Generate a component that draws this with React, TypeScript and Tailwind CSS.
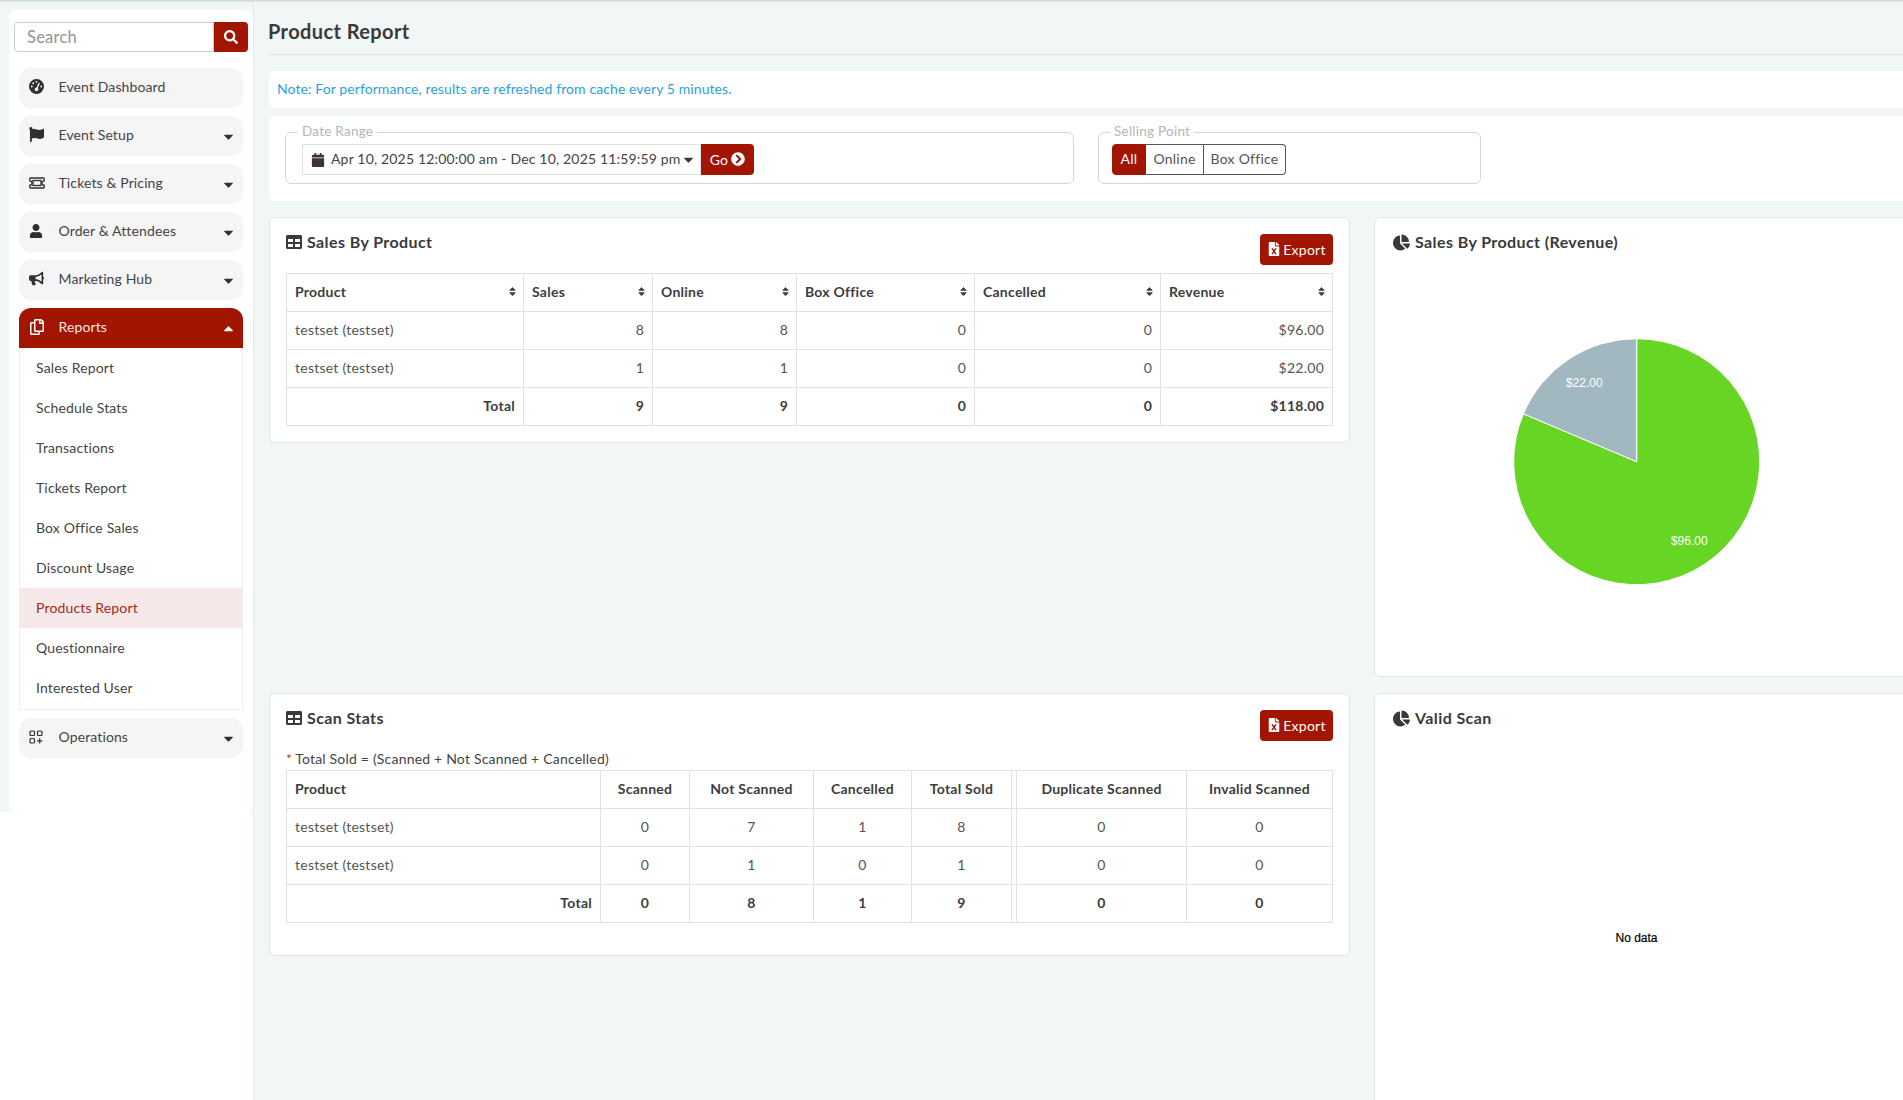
import React from "react";
import { FaSearch, FaFlag, FaUser, FaBullhorn, FaRegCopy, FaCaretDown, FaCaretUp, FaCalendar, FaChevronCircleRight, FaFileExcel, FaTable, FaChartPie, FaSort } from "react-icons/fa";
import { FaGaugeHigh } from "react-icons/fa6";

const TicketIcon = () => (
  <svg width="16" height="12" viewBox="0 0 16 12" fill="none" stroke="currentColor" strokeWidth="1.3">
    <path d="M1.5 1h13a.7.7 0 0 1 .7.7v2.1a2.2 2.2 0 0 0 0 4.4v2.1a.7.7 0 0 1-.7.7h-13a.7.7 0 0 1-.7-.7V8.200a2.200 2.200 0 0 0 0-4.400V1.700A.7.7 0 0 1 1.500 1z" />
    <rect x="4" y="3.500" width="8" height="5" />
  </svg>
);

const OpsIcon = () => (
  <svg width="14" height="14" viewBox="0 0 14 14" fill="none" stroke="currentColor" strokeWidth="1.2">
    <rect x="1" y="1" width="4.500" height="4.500" rx="1" />
    <rect x="8.500" y="1" width="4.500" height="4.500" rx="1" />
    <rect x="1" y="8.500" width="4.500" height="4.500" rx="1" />
    <path d="M10.700 8.200v5.300M8 10.800h5.300" />
  </svg>
);

const navTop = [
  { label: "Event Dashboard", icon: <FaGaugeHigh size={15} />, caret: false },
  { label: "Event Setup", icon: <FaFlag size={15} />, caret: true },
  { label: "Tickets & Pricing", icon: <TicketIcon />, caret: true },
  { label: "Order & Attendees", icon: <FaUser size={14} />, caret: true },
  { label: "Marketing Hub", icon: <FaBullhorn size={15} />, caret: true },
];

const subItems = ["Sales Report", "Schedule Stats", "Transactions", "Tickets Report", "Box Office Sales", "Discount Usage", "Products Report", "Questionnaire", "Interested User"];

function NavItem({ label, icon, caret }: { label: string; icon: React.ReactNode; caret: boolean }) {
  return (
    <div className="flex h-10 items-center rounded-xl bg-[#f5f5f6] pl-[10px] pr-[7px] text-[14px] tracking-[0.12px] text-[#444]">
      <span className="flex w-[29.5px] shrink-0 items-center pb-[3px] text-[#342f2f]">{icon}</span>
      <span className="flex-1 pb-[3px]">{label}</span>
      {caret && <FaCaretDown size={15} className="text-[#342f2f]" />}
    </div>
  );
}

function Sidebar() {
  return (
    <aside className="flex w-[254px] shrink-0 flex-col border-r border-[#e4e9ea] bg-white">
      <div className="bg-[#f1f6f6] pl-[9px] pt-[7px]">
        <div className="h-[802px] rounded-t-lg rounded-b-md bg-white px-[5px] pt-[12px]">
          <div className="flex h-[30px]">
            <div className="flex h-[30px] w-[200px] items-center rounded-l border border-[#ccc] bg-white pl-[12px] text-[16.5px] text-[#8f9499]">Search</div>
            <div className="flex h-[30px] w-[34px] items-center justify-center rounded-r bg-[#a31503] pb-px pr-px text-white"><FaSearch size={14} /></div>
          </div>
          <nav className="mx-[5px] mt-[16px] flex flex-col gap-2">
            {navTop.map((n) => <NavItem key={n.label} {...n} />)}
            <div>
              <div className="flex h-10 items-center rounded-t-xl bg-[#a31503] pl-[10px] pr-[7px] text-[14px] tracking-[0.12px] text-[#f7e7e5]">
                <span className="flex w-[29.5px] shrink-0 items-center pb-[3px] text-white"><FaRegCopy size={16} /></span>
                <span className="flex-1 pb-[3px]">Reports</span>
                <FaCaretUp size={15} className="text-white" />
              </div>
              <div className="border border-t-0 border-[#eeeeee] bg-white pb-px">
                {subItems.map((s) => (
                  <div key={s} className={`flex h-10 items-center pb-[2px] pl-[16px] text-[14px] tracking-[0.15px] ${s === "Products Report" ? "bg-[#f6e7e8] text-[#a52a20]" : "text-[#444]"}`}>{s}</div>
                ))}
              </div>
            </div>
            <NavItem label="Operations" icon={<OpsIcon />} caret />
          </nav>
        </div>
      </div>
      <div className="flex-1 bg-white" />
    </aside>
  );
}

function Th({ children, sort, cls = "" }: { children?: React.ReactNode; sort?: boolean; cls?: string }) {
  return (
    <th className={`h-[38px] border border-[#e0e2e4] pb-[2px] pl-2 text-[14px] font-bold text-[#3d3d3d] ${sort ? "pr-[5px]" : "pr-2"} ${cls}`}>
      {sort ? (
        <span className="flex items-center justify-between">{children}<FaSort size={11} className="text-[#3d3d3d]" /></span>
      ) : children}
    </th>
  );
}

function Td({ children, cls = "" }: { children?: React.ReactNode; cls?: string }) {
  return <td className={`h-[38px] border border-[#e0e2e4] px-2 pb-[2px] text-[14px] ${cls}`}>{children}</td>;
}

function ExportBtn() {
  return (
    <button className="flex h-[31px] w-[73px] items-center justify-center gap-[2px] rounded bg-[#a31503] pb-px text-[14px] text-white">
      <FaFileExcel size={14} />Export
    </button>
  );
}

function SalesTable() {
  const rows = [
    ["testset (testset)", "8", "8", "0", "0", "$96.00"],
    ["testset (testset)", "1", "1", "0", "0", "$22.00"],
  ];
  return (
    <table className="w-[1046px] table-fixed border-collapse text-[#555]">
      <colgroup>
        <col className="w-[237px]" /><col className="w-[129px]" /><col className="w-[144px]" /><col className="w-[178px]" /><col className="w-[186px]" /><col className="w-[172px]" />
      </colgroup>
      <thead>
        <tr>{["Product", "Sales", "Online", "Box Office", "Cancelled", "Revenue"].map((h) => <Th key={h} sort cls="text-left">{h}</Th>)}</tr>
      </thead>
      <tbody>
        {rows.map((r, i) => (
          <tr key={i}>{r.map((c, j) => <Td key={j} cls={j === 0 ? "text-left" : "text-right"}>{c}</Td>)}</tr>
        ))}
        <tr className="font-bold text-[#3d3d3d]">{["Total", "9", "9", "0", "0", "$118.00"].map((c, j) => <Td key={j} cls="text-right">{c}</Td>)}</tr>
      </tbody>
    </table>
  );
}

function ScanTable() {
  const rows = [
    ["0", "7", "1", "8", "", "0", "0"],
    ["0", "1", "0", "1", "", "0", "0"],
  ];
  return (
    <table className="w-[1046px] table-fixed border-collapse text-[#555]">
      <colgroup>
        <col className="w-[314px]" /><col className="w-[89px]" /><col className="w-[124px]" /><col className="w-[98px]" /><col className="w-[100px]" /><col className="w-[5px]" /><col className="w-[170px]" /><col className="w-[146px]" />
      </colgroup>
      <thead>
        <tr>
          <Th cls="text-left">Product</Th>
          {["Scanned", "Not Scanned", "Cancelled", "Total Sold"].map((h) => <Th key={h} cls="text-center">{h}</Th>)}
          <th className="border border-[#e0e2e4]" />
          {["Duplicate Scanned", "Invalid Scanned"].map((h) => <Th key={h} cls="text-center">{h}</Th>)}
        </tr>
      </thead>
      <tbody>
        {rows.map((r, i) => (
          <tr key={i}>
            <Td cls="text-left">testset (testset)</Td>
            {r.map((c, j) => j === 4 ? <td key={j} className="border border-[#e0e2e4]" /> : <Td key={j} cls="text-center">{c}</Td>)}
          </tr>
        ))}
        <tr className="font-bold text-[#3d3d3d]">
          <Td cls="text-right">Total</Td>
          {["0", "8", "1", "9", "", "0", "0"].map((c, j) => j === 4 ? <td key={j} className="border border-[#e0e2e4]" /> : <Td key={j} cls="text-center">{c}</Td>)}
        </tr>
      </tbody>
    </table>
  );
}

function CardTitle({ icon, children }: { icon: React.ReactNode; children: React.ReactNode }) {
  return (
    <h3 className="flex h-4 items-center gap-[5px] text-[16px] font-bold leading-4 tracking-[0.4px] text-[#3a3a3a]">
      {icon}{children}
    </h3>
  );
}

function Pie() {
  const cx = 245.7, cy = 200.7, r = 123;
  const lx = cx - 113.3, ly = cy - 47.9;
  return (
    <svg width="491" height="398" viewBox="0 0 491 398" className="-ml-[2px] mt-[11px] block">
      <path d={`M${cx} ${cy}L${cx} ${cy - r}A${r} ${r} 0 1 1 ${lx} ${ly}Z`} fill="#66d523" stroke="#fff" strokeWidth="1" />
      <path d={`M${cx} ${cy}L${lx} ${ly}A${r} ${r} 0 0 1 ${cx} ${cy - r}Z`} fill="#a1b8c1" stroke="#fff" strokeWidth="1" />
      <text x="193.300" y="125.500" textAnchor="middle" fontSize="12" letterSpacing="0" fill="#fff" fontFamily="'Liberation Sans', Arial, sans-serif">$22.00</text>
      <text x="298.300" y="283.500" textAnchor="middle" fontSize="12" letterSpacing="0" fill="#fff" fontFamily="'Liberation Sans', Arial, sans-serif">$96.00</text>
    </svg>
  );
}

const card = "rounded-md border border-[#e3e6e8] bg-white";

export default function App() {
  return (
    <div className="flex h-[1100px] w-[1903px] flex-col overflow-hidden bg-[#f1f6f6] font-['Lato',sans-serif] tracking-[0.25px] text-[#444]">
      <div className="h-[3px] shrink-0 bg-[linear-gradient(#cfd3d6,#f1f6f6)]" />
      <div className="flex min-h-0 flex-1">
        <Sidebar />
        <main className="min-w-0 flex-1 pl-[15px]">
          <div className="-ml-px flex h-[52px] items-center border-b border-[#dde2e4] pt-[4px]">
            <h1 className="text-[20px] font-bold tracking-[0.4px] text-[#3a3a3a]">Product Report</h1>
          </div>
          <div className="mt-[16px] flex h-[37px] items-center rounded-l-md bg-white pb-[2px] pl-[8px] text-[14px] tracking-[0.09px] text-[#2f9fdc]">
            Note: For performance, results are refreshed from cache every 5 minutes.
          </div>
          <div className="mt-[8px] flex h-[85px] gap-[24px] rounded-l-md bg-white pl-[16px] pt-[7px]">
            <fieldset className="h-[61px] w-[789px] rounded-md border border-[#d3d6d9] px-[16px]">
              <legend className="ml-[-4px] -translate-y-[1.5px] px-[4px] text-[13.5px] leading-[18px] text-[#b5b5b5]">Date Range</legend>
              <div className="mt-[3px] flex h-[31px]">
                <div className="flex w-[399px] items-center border border-[#dee2e6] pl-[8px] text-[14px] tracking-[0.17px] text-[#444]">
                  <FaCalendar size={14} className="mr-[6px] shrink-0 text-[#3f3232]" />
                  <span className="whitespace-nowrap pb-[2px]">Apr 10, 2025 12:00:00 am - Dec 10, 2025 11:59:59 pm</span>
                  <FaCaretDown size={15} className="shrink-0 text-[#3f3232]" />
                </div>
                <button className="flex w-[53px] items-center justify-center gap-[3px] rounded-r bg-[#a31503] pb-px text-[14px] text-white">
                  Go<FaChevronCircleRight size={14} />
                </button>
              </div>
            </fieldset>
            <fieldset className="h-[61px] w-[383px] rounded-md border border-[#d3d6d9] px-[13px]">
              <legend className="ml-[-2px] -translate-y-[1.5px] px-[4px] text-[13.5px] leading-[18px] text-[#b5b5b5]">Selling Point</legend>
              <div className="mt-[3px] flex h-[31px] w-[174px] text-[14px]">
                <div className="flex w-[34px] items-center justify-center rounded-l border border-[#a31503] bg-[#a31503] pb-[2px] text-white">All</div>
                <div className="flex w-[58px] items-center justify-center border border-l-0 border-[#555] pb-[2px] text-[#555]">Online</div>
                <div className="flex w-[82px] items-center justify-center rounded-r border border-l-0 border-[#555] pb-[2px] text-[#555]">Box Office</div>
              </div>
            </fieldset>
          </div>
          <div className="mt-[16px] grid grid-cols-[1081px_530px] grid-rows-[460px_auto] gap-x-[24px] gap-y-[16px]">
            <section className={`${card} self-start px-[16px] pb-[16px] pt-[16px]`}>
              <div className="flex h-[31px] items-start justify-between">
                <CardTitle icon={<FaTable size={16} />}>Sales By Product</CardTitle>
                <ExportBtn />
              </div>
              <div className="mt-[8px]"><SalesTable /></div>
            </section>
            <section className={`${card} rounded-r-none pl-[18px] pt-[16px]`}>
              <CardTitle icon={<FaChartPie size={17} />}>Sales By Product (Revenue)</CardTitle>
              <Pie />
            </section>
            <section className={`${card} self-start px-[16px] pb-[32px] pt-[16px]`}>
              <div className="flex h-[31px] items-start justify-between">
                <CardTitle icon={<FaTable size={16} />}>Scan Stats</CardTitle>
                <ExportBtn />
              </div>
              <div className="flex h-[29px] items-end pb-px text-[14px] leading-[20px] tracking-[0.2px] text-[#444]">
                <span className="mr-[3px] text-[#c0392b]">*</span>Total Sold = (Scanned + Not Scanned + Cancelled)
              </div>
              <ScanTable />
            </section>
            <section className={`${card} h-[500px] rounded-r-none pl-[18px] pt-[16px]`}>
              <CardTitle icon={<FaChartPie size={17} />}>Valid Scan</CardTitle>
              <div className="-ml-[2px] mt-[203px] w-[491px] text-center font-['Liberation_Sans',sans-serif] text-[12px] font-normal tracking-normal text-black [-webkit-text-stroke:0.2px_black]">No data</div>
            </section>
          </div>
        </main>
      </div>
    </div>
  );
}
